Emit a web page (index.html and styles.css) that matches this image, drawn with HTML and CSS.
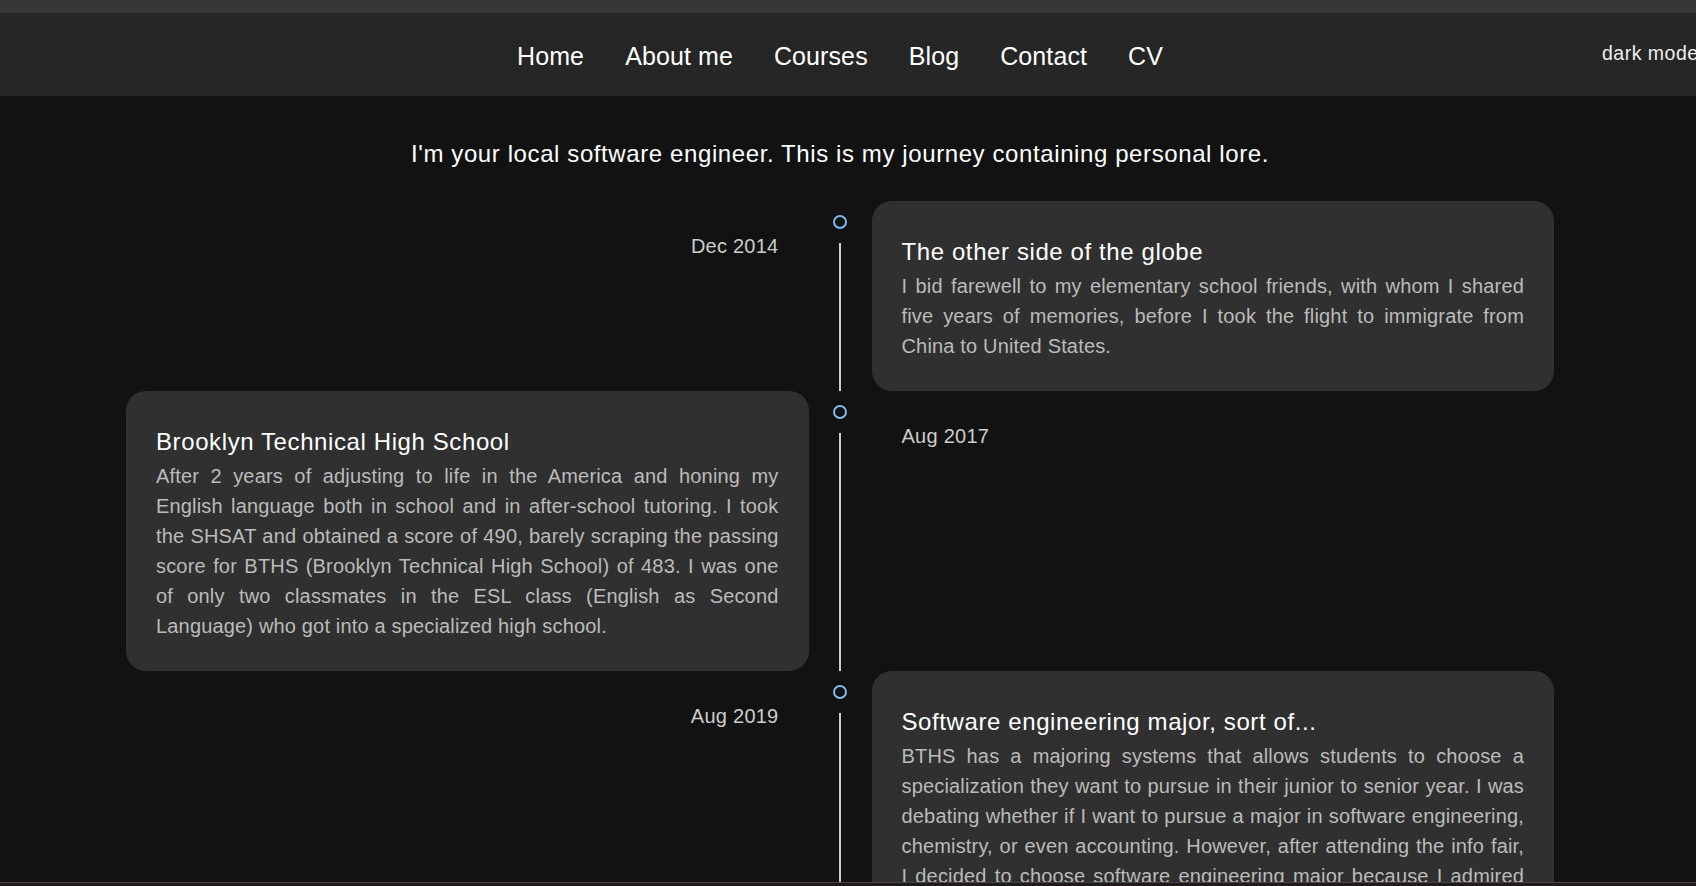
FILE: index.html
```html
<!DOCTYPE html>
<html lang="en">
<head>
<meta charset="utf-8">
<title>Journey</title>
<link rel="stylesheet" href="styles.css">
</head>
<body>
<div class="topstrip"></div>
<header class="nav">
  <ul class="links">
    <li><a href="#">Home</a></li>
    <li><a href="#">About me</a></li>
    <li><a href="#">Courses</a></li>
    <li><a href="#">Blog</a></li>
    <li><a href="#">Contact</a></li>
    <li><a href="#">CV</a></li>
  </ul>
  <label class="mode">dark mode</label>
</header>
<main class="page">
  <p class="intro">I'm your local software engineer. This is my journey containing personal lore.</p>
  <section class="timeline">
    <div class="item">
      <div class="side date left"><p>Dec 2014</p></div>
      <div class="axis"><span class="dot"></span><span class="line"></span></div>
      <div class="side card">
        <h3>The other side of the globe</h3>
        <p>I bid farewell to my elementary school friends, with whom I shared five years of memories, before I took the flight to immigrate from China to United States.</p>
      </div>
    </div>
    <div class="item">
      <div class="side card">
        <h3>Brooklyn Technical High School</h3>
        <p>After 2 years of adjusting to life in the America and honing my English language both in school and in after-school tutoring. I took the SHSAT and obtained a score of 490, barely scraping the passing score for BTHS (Brooklyn Technical High School) of 483. I was one of only two classmates in the ESL class (English as Second Language) who got into a specialized high school.</p>
      </div>
      <div class="axis"><span class="dot"></span><span class="line"></span></div>
      <div class="side date"><p>Aug 2017</p></div>
    </div>
    <div class="item">
      <div class="side date left"><p>Aug 2019</p></div>
      <div class="axis"><span class="dot"></span><span class="line"></span></div>
      <div class="side card">
        <h3>Software engineering major, sort of...</h3>
        <p>BTHS has a majoring systems that allows students to choose a specialization they want to pursue in their junior to senior year. I was debating whether if I want to pursue a major in software engineering, chemistry, or even accounting. However, after attending the info fair, I decided to choose software engineering major because I admired the projects that the upperclassmen showcased and I wanted to learn how to build them myself.</p>
      </div>
    </div>
  </section>
</main>
<div class="taskbar"></div>
</body>
</html>
```
FILE: styles.css
```css
html, body {
  margin: 0;
  padding: 0;
  background: #121212;
  overflow-x: hidden;
  font-family: "Liberation Sans", Arial, sans-serif;
}

.topstrip {
  height: 13px;
  background: #363636;
}

.nav {
  position: relative;
  height: 83px;
  width: 1680px;
  padding-right: 16px;
  background: #262626;
  display: flex;
  align-items: center;
  justify-content: center;
}

.links {
  list-style: none;
  margin: 0;
  padding: 3px 0 0 0;
  display: flex;
  gap: 41px;
}

.links a {
  color: #ffffff;
  text-decoration: none;
  font-size: 25px;
  letter-spacing: 0.1px;
}

.mode {
  position: absolute;
  left: 1602px;
  top: 29px;
  color: #eeeeee;
  font-size: 19.5px;
  letter-spacing: 0.5px;
  white-space: nowrap;
}

.page {
  width: 1680px;
}

.intro {
  margin: 0;
  padding-top: 44px;
  text-align: center;
  color: #ffffff;
  font-size: 24px;
  letter-spacing: 0.6px;
}

.timeline {
  width: 85%;
  margin: 33px auto 0;
}

.item {
  display: grid;
  grid-template-columns: 1fr 63px 1fr;
}

.side {
  padding: 30px;
}

.date p {
  margin: 0;
  font-size: 20px;
  line-height: 30px;
  letter-spacing: 0.25px;
  color: #cccccc;
}

.date.left {
  text-align: right;
}

.card {
  background: #303030;
  border-radius: 20px;
}

.card h3 {
  margin: 3px 0 1px;
  font-size: 24px;
  line-height: 36px;
  font-weight: normal;
  letter-spacing: 0.6px;
  color: #ffffff;
}

.card p {
  margin: 0;
  font-size: 20px;
  line-height: 30px;
  letter-spacing: 0.17px;
  color: #bbbbbb;
  text-align: justify;
}

.axis {
  display: flex;
  flex-direction: column;
  align-items: center;
}

.dot {
  box-sizing: border-box;
  width: 14px;
  height: 14px;
  margin-top: 14px;
  border: 2px solid #7cb9ee;
  border-radius: 50%;
}

.line {
  flex: 1;
  width: 2px;
  margin-top: 14px;
  background: #cccccc;
}

.taskbar {
  position: fixed;
  left: 0;
  right: 0;
  bottom: 0;
  height: 3px;
  border-top: 1px solid #454545;
  background: #201c1e;
}
```
